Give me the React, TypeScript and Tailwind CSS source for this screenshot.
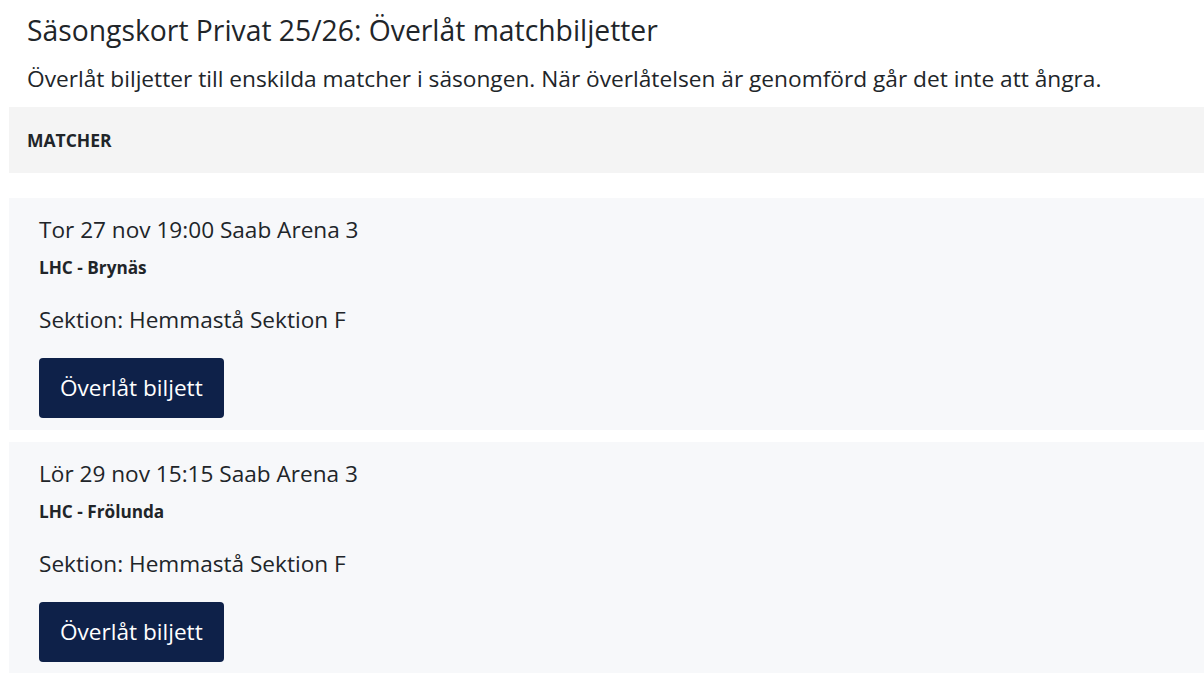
const matches = [
  { date: 'Tor 27 nov 19:00 Saab Arena 3', teams: 'LHC - Brynäs', section: 'Hemmastå Sektion F' },
  { date: 'Lör 29 nov 15:15 Saab Arena 3', teams: 'LHC - Frölunda', section: 'Hemmastå Sektion F' },
];

function MatchCard({ date, teams, section }: { date: string; teams: string; section: string }) {
  return (
    <div className="bg-[#f7f8fa] pl-[30px] pt-[17px] pb-[12px]">
      <div className="text-[22.6px] leading-[30px]">{date}</div>
      <div className="mt-[11px] text-[17.2px] font-bold leading-[24px]">{teams}</div>
      <div className="mt-[25px] text-[22.6px] leading-[30px]">Sektion: {section}</div>
      <button className="mt-[23px] h-[60px] rounded-[4px] bg-[#0e2149] px-[21px] text-[22.6px] text-white">
        Överlåt biljett
      </button>
    </div>
  );
}

export default function App() {
  return (
    <div className="min-h-screen bg-white pl-[9px] text-[#212529] font-['Open_Sans',sans-serif]">
      <div className="pl-[18px] pt-[13px]">
        <h1 className="text-[28.3px] leading-[34px] font-normal">Säsongskort Privat 25/26: Överlåt matchbiljetter</h1>
        <p className="mt-[17px] text-[22.7px] leading-[30px]">
          Överlåt biljetter till enskilda matcher i säsongen. När överlåtelsen är genomförd går det inte att ångra.
        </p>
      </div>
      <div className="mt-[13px] flex h-[66px] items-center bg-[#f4f4f4] pl-[18px]">
        <span className="text-[17.5px] font-bold">MATCHER</span>
      </div>
      <div className="mt-[25px] flex flex-col gap-[12px]">
        {matches.map((m) => (
          <MatchCard key={m.date} {...m} />
        ))}
      </div>
    </div>
  );
}
